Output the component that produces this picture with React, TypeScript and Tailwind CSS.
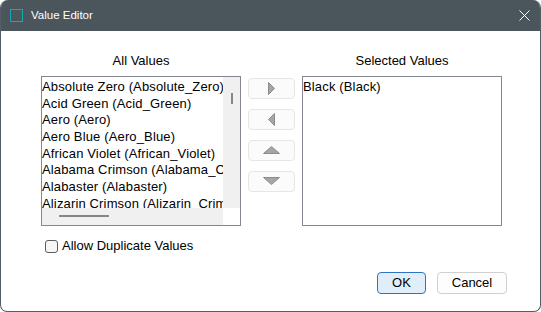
import React from "react";

const items = [
  "Absolute Zero (Absolute_Zero)",
  "Acid Green (Acid_Green)",
  "Aero (Aero)",
  "Aero Blue (Aero_Blue)",
  "African Violet (African_Violet)",
  "Alabama Crimson (Alabama_Crimson)",
  "Alabaster (Alabaster)",
  "Alizarin Crimson (Alizarin_Crimson)",
];

function Tri({ dir }: { dir: "r" | "l" | "u" | "d" }) {
  if (dir === "r")
    return (
      <svg width="7" height="13" viewBox="0 0 7 13">
        <path d="M0.5 0.5 L6.5 6.5 L0.5 12.5 Z" fill="#a6a6a6" stroke="#8c8c8c" strokeWidth="1" />
      </svg>
    );
  if (dir === "l")
    return (
      <svg width="7" height="13" viewBox="0 0 7 13">
        <path d="M6.5 0.5 L0.5 6.5 L6.5 12.5 Z" fill="#a6a6a6" stroke="#8c8c8c" strokeWidth="1" />
      </svg>
    );
  if (dir === "u")
    return (
      <svg width="17" height="8" viewBox="0 0 17 8">
        <path d="M0.5 7.5 L8.5 0.5 L16.5 7.5 Z" fill="#a6a6a6" stroke="#8c8c8c" strokeWidth="1" />
      </svg>
    );
  return (
    <svg width="17" height="8" viewBox="0 0 17 8">
      <path d="M0.5 0.5 L8.5 7.5 L16.5 0.5 Z" fill="#a6a6a6" stroke="#8c8c8c" strokeWidth="1" />
    </svg>
  );
}

function ArrowBtn({ dir }: { dir: "r" | "l" | "u" | "d" }) {
  return (
    <div className="h-[21px] w-[47px] rounded-[4px] border border-[#e6e6e6] bg-[#fbfbfb] flex items-center justify-center">
      <Tri dir={dir} />
    </div>
  );
}

export default function App() {
  return (
    <div
      className="w-[541px] h-[312px] bg-white overflow-hidden"
      style={{ fontFamily: '"Liberation Sans", Arial, sans-serif' }}
    >
      <div className="w-[541px] h-[312px] flex flex-col rounded-t-[8px] rounded-b-[7px] overflow-hidden border-x border-b border-[#555e65] bg-white">
        {/* Title bar */}
        <div className="h-[31px] shrink-0 bg-[#4b555c] flex items-center relative">
          <div className="ml-[9px] w-[13px] h-[13px] border-[1.5px] border-[#1ba3b8]" />
          <span className="ml-[8px] text-[11.5px] text-white leading-none">Value Editor</span>
          <div className="ml-auto mr-[10px] w-[12px] h-[12px] flex items-center justify-center">
            <svg width="11" height="11" viewBox="0 0 11 11">
              <path d="M0.5 0.5 L10.5 10.5 M10.5 0.5 L0.5 10.5" stroke="#ffffff" strokeWidth="1" />
            </svg>
          </div>
        </div>

        {/* Body */}
        <div className="flex-1 flex flex-col pl-[40px] text-[13px] text-black">
          <div className="flex flex-row pt-[22px]">
            {/* Left column */}
            <div className="w-[200px] flex flex-col">
              <div className="h-[16px] leading-[16px] text-center mb-[7px]">All Values</div>
              <div className="h-[150px] border border-[#828790] flex flex-col">
                <div className="flex-1 flex flex-row min-h-0">
                  <div className="flex-1 overflow-hidden pt-[2px] tracking-[0.15px]">
                    {items.map((it) => (
                      <div key={it} className="h-[16.7px] leading-[16.7px] whitespace-nowrap">
                        {it}
                      </div>
                    ))}
                  </div>
                  <div className="w-[17px] bg-[#f0f0f0] relative">
                    <div className="absolute left-[8px] top-[16px] w-[2px] h-[11px] bg-[#868686]" />
                  </div>
                </div>
                <div className="h-[17px] shrink-0 flex flex-row">
                  <div className="flex-1 bg-[#f0f0f0] relative">
                    <div className="absolute left-[17px] top-[7px] w-[50px] h-[2px] bg-[#868686]" />
                  </div>
                  <div className="w-[17px] bg-white" />
                </div>
              </div>
            </div>

            {/* Buttons */}
            <div className="ml-[7px] mt-[24.5px] flex flex-col gap-[10px]">
              <ArrowBtn dir="r" />
              <ArrowBtn dir="l" />
              <ArrowBtn dir="u" />
              <ArrowBtn dir="d" />
            </div>

            {/* Right column */}
            <div className="ml-[7px] w-[200px] flex flex-col">
              <div className="h-[16px] leading-[16px] text-center mb-[7px]">Selected Values</div>
              <div className="h-[150px] border border-[#828790] pt-[2px] tracking-[0.15px]">
                <div className="h-[16.7px] leading-[16.7px] whitespace-nowrap">Black (Black)</div>
              </div>
            </div>
          </div>

          {/* Checkbox */}
          <div className="mt-[12px] ml-[4px] flex items-center">
            <div className="w-[13px] h-[13px] rounded-[3px] border border-[#5c5c5c] bg-[#f6f6f6]" />
            <span className="ml-[4px] leading-[16px]">Allow Duplicate Values</span>
          </div>

          {/* Bottom buttons */}
          <div className="mt-[18px] flex flex-row justify-end pr-[33px] gap-[11px]">
            <div className="w-[49px] h-[22px] rounded-[4px] border border-[#2f74c0] bg-[#e0eef9] flex items-center justify-center">
              OK
            </div>
            <div className="w-[70px] h-[22px] rounded-[4px] border border-[#d0d0d0] bg-[#fdfdfd] flex items-center justify-center">
              Cancel
            </div>
          </div>
        </div>
      </div>
    </div>
  );
}
